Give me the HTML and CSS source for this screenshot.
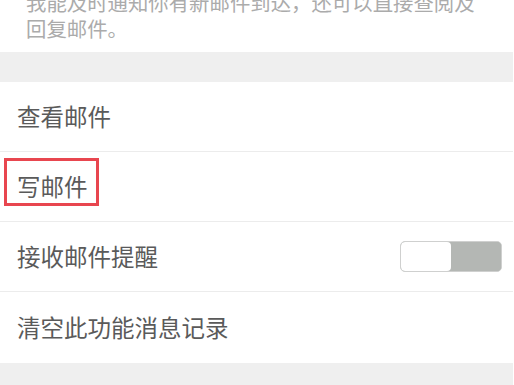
FILE: index.html
```html
<!DOCTYPE html>
<html lang="zh-CN">
<head>
<meta charset="utf-8">
<link rel="stylesheet" href="styles.css">
</head>
<body>
<div class="page">
  <section class="intro">
    <p class="intro-text">我能及时通知你有新邮件到达，还可以直接查阅及回复邮件。</p>
  </section>
  <div class="band"></div>
  <ul class="menu">
    <li class="row"><span class="label">查看邮件</span></li>
    <li class="row row-marked"><span class="label">写邮件</span><span class="mark"></span></li>
    <li class="row"><span class="label">接收邮件提醒</span><span class="toggle"><span class="toggle-on"></span><span class="toggle-off"></span></span></li>
    <li class="row row-last"><span class="label">清空此功能消息记录</span></li>
  </ul>
  <div class="band band-bottom"></div>
</div>
</body>
</html>
```

FILE: styles.css
```css
* { box-sizing: border-box; }
html, body { margin: 0; padding: 0; background: #ffffff; }
body {
  width: 514px;
  height: 385px;
  overflow: hidden;
  font-family: "Noto Sans CJK SC", "Noto Sans", sans-serif;
}
.page {
  width: 513px;
  display: flex;
  flex-direction: column;
}
.intro {
  background: #fff;
  margin-top: -11px;
  height: 63px;
  padding: 0 30px 0 26px;
}
.intro-text {
  margin: 0;
  font-size: 20.4px;
  line-height: 26px;
  color: #ababab;
}
.band {
  height: 30px;
  background: #efefef;
}
.band-bottom { height: 40px; }
.menu {
  list-style: none;
  margin: 0;
  padding: 0;
  background: #fff;
}
.row {
  position: relative;
  height: 70px;
  display: flex;
  align-items: center;
  justify-content: space-between;
  padding: 0 11px 0 17px;
  border-bottom: 1px solid #ececec;
}
.row-last { border-bottom: none; height: 71px; }
.label {
  font-size: 23.5px;
  color: #5a5a5a;
  line-height: 1;
}
.mark {
  position: absolute;
  left: 4px;
  top: 6px;
  width: 95px;
  height: 48px;
  border: 3px solid #e8464f;
}
.toggle {
  display: flex;
  width: 102px;
  height: 31px;
  border: 1.5px solid #cfd0cf;
  border-radius: 5px;
  overflow: hidden;
  background: #b4b7b4;
}
.toggle-on {
  flex: 1;
  background: #fff;
  border-radius: 4px;
}
.toggle-off {
  flex: 1;
  background: #b4b7b4;
}
```
